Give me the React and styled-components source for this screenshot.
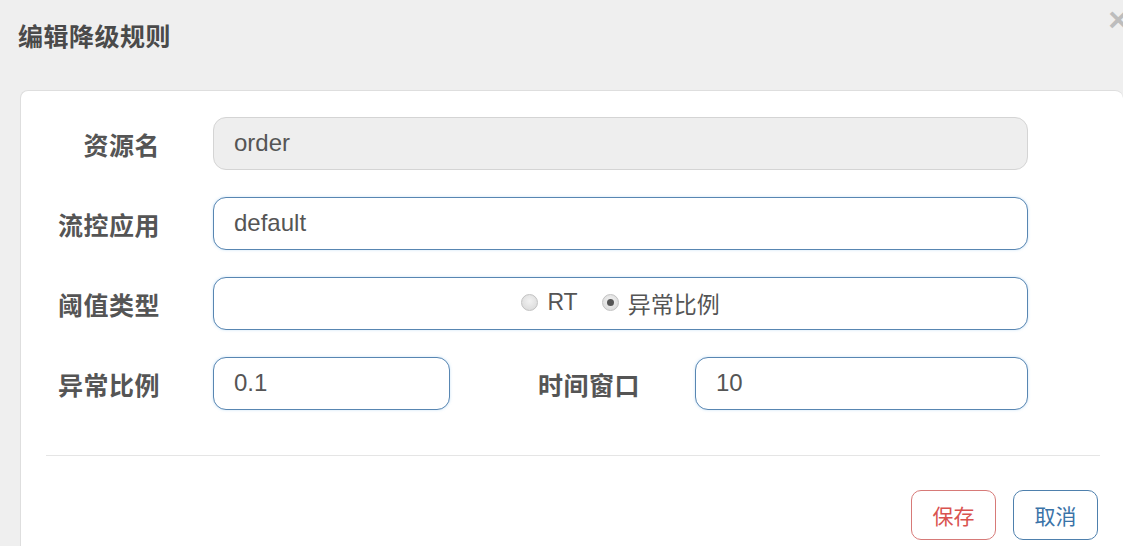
import React from 'react';
import styled, { createGlobalStyle } from 'styled-components';

const GlobalStyle = createGlobalStyle`
  html, body {
    margin: 0;
    padding: 0;
    background: #ffffff;
    font-family: 'Liberation Sans', 'Noto Sans CJK SC', sans-serif;
  }
`;

// whole modal, cut off at the right edge of the shot
const Modal = styled.div`
  position: relative;
  width: 1123px;
  height: 546px;
  background: #efefef;
  overflow: hidden;
`;

const Header = styled.div`
  height: 90px;
  display: flex;
  align-items: center;
  padding-left: 18px;
  box-sizing: border-box;
  padding-bottom: 20px;
`;

const Title = styled.h4`
  margin: 0;
  font-family: 'Noto Sans CJK SC', sans-serif;
  font-size: 25px;
  font-weight: 700;
  color: #4a4a4a;
  letter-spacing: 0.5px;
`;

const Close = styled.span`
  position: absolute;
  top: 2px;
  right: -5px;
  font-family: 'Liberation Sans', sans-serif;
  font-size: 34px;
  font-weight: 700;
  color: #bdbdbd;
  line-height: 1;
`;

const Body = styled.div`
  padding-left: 20px;
`;

const Card = styled.div`
  background: #ffffff;
  border: 1px solid #dedede;
  border-right: none;
  border-radius: 8px 8px 0 0;
  height: 470px;
  box-sizing: border-box;
  padding-top: 26px;
`;

const Form = styled.div`
  display: flex;
  flex-direction: column;
  gap: 27px;
`;

const Row = styled.div`
  display: flex;
  align-items: center;
  height: 53px;
`;

const Label = styled.label`
  flex-shrink: 0;
  width: ${p => p.$width || 139}px;
  margin-right: ${p => p.$gap || 53}px;
  text-align: right;
  font-family: 'Noto Sans CJK SC', sans-serif;
  font-size: 25px;
  font-weight: 700;
  color: #555;
  letter-spacing: 0.5px;
`;

const Input = styled.div`
  flex-shrink: 0;
  width: ${p => p.$width || 815}px;
  height: 53px;
  box-sizing: border-box;
  display: flex;
  align-items: center;
  justify-content: ${p => (p.$center ? 'center' : 'flex-start')};
  padding: 0 20px 2px;
  border: 1.5px solid ${p => (p.$disabled ? '#d4d4d4' : '#5886b2')};
  border-radius: 13px;
  background: ${p => (p.$disabled ? '#eeeeee' : '#ffffff')};
  box-shadow: ${p => (p.$disabled ? 'none' : '0 0 3px rgba(102, 175, 233, 0.35)')};
  font-family: 'Liberation Sans', sans-serif;
  font-size: 24px;
  color: #555;
`;

const RadioGroup = styled.div`
  display: flex;
  align-items: center;
  gap: 24px;
`;

const RadioItem = styled.span`
  display: flex;
  align-items: center;
  gap: 9px;
  font-family: 'Liberation Sans', 'Noto Sans CJK SC', sans-serif;
  font-size: 23px;
  color: #555;
`;

const Circle = styled.span`
  position: relative;
  width: 17px;
  height: 17px;
  box-sizing: border-box;
  border-radius: 50%;
  border: 1px solid #c2c2c2;
  background: radial-gradient(circle at 50% 40%, #f2f2f2, #d6d6d6);

  &::after {
    content: '';
    display: ${p => (p.$checked ? 'block' : 'none')};
    position: absolute;
    left: 4px;
    top: 4px;
    width: 7px;
    height: 7px;
    border-radius: 50%;
    background: #555;
  }
`;

const Divider = styled.div`
  margin: 45px 23px 0 25px;
  height: 1px;
  background: #e5e5e5;
`;

const Footer = styled.div`
  display: flex;
  justify-content: flex-end;
  gap: 17px;
  padding: 34px 25px 0 0;
`;

const Button = styled.button`
  width: 85px;
  height: 50px;
  border-radius: 10px;
  background: #ffffff;
  border: 1.5px solid ${p => (p.$danger ? '#d77a78' : '#4e80ad')};
  color: ${p => (p.$danger ? '#d9534f' : '#3a73a8')};
  font-family: 'Noto Sans CJK SC', sans-serif;
  font-size: 21px;
  padding: 0;
`;

export default function App() {
  return (
    <>
      <GlobalStyle />
      <Modal>
        <Header>
          <Title>编辑降级规则</Title>
          <Close>×</Close>
        </Header>
        <Body>
          <Card>
            <Form>
              <Row>
                <Label>资源名</Label>
                <Input $disabled>order</Input>
              </Row>
              <Row>
                <Label>流控应用</Label>
                <Input>default</Input>
              </Row>
              <Row>
                <Label>阈值类型</Label>
                <Input $center>
                  <RadioGroup>
                    <RadioItem><Circle />RT</RadioItem>
                    <RadioItem><Circle $checked />异常比例</RadioItem>
                  </RadioGroup>
                </Input>
              </Row>
              <Row>
                <Label>异常比例</Label>
                <Input $width={237}>0.1</Input>
                <Label $width={190} $gap={55}>时间窗口</Label>
                <Input $width={333}>10</Input>
              </Row>
            </Form>
            <Divider />
            <Footer>
              <Button $danger>保存</Button>
              <Button>取消</Button>
            </Footer>
          </Card>
        </Body>
      </Modal>
    </>
  );
}
